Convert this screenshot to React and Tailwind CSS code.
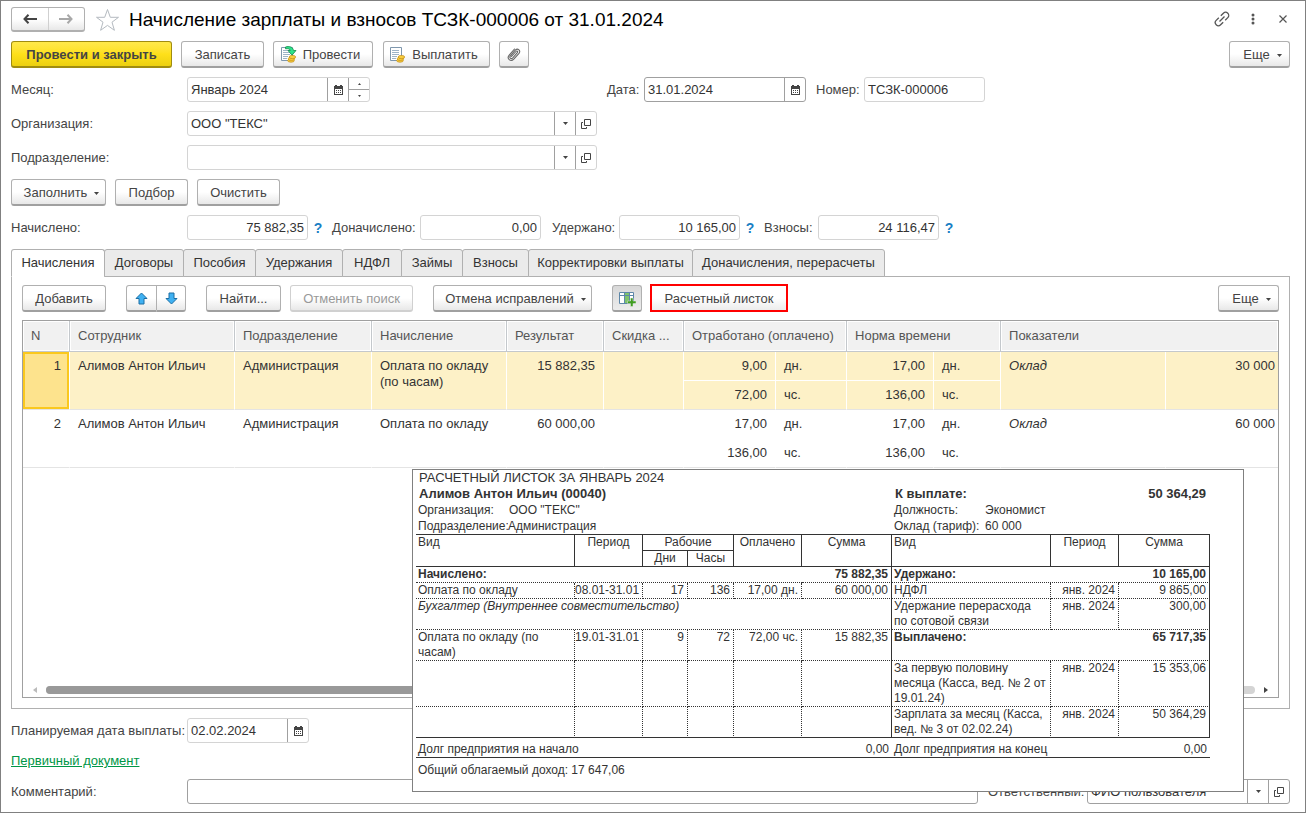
import { useState } from "react";
import clsx from "clsx";

const TABS = [
  { title: "Начисления", width: "w-[94px]" },
  { title: "Договоры", width: "w-[80px]" },
  { title: "Пособия", width: "w-[73px]" },
  { title: "Удержания", width: "w-[88px]" },
  { title: "НДФЛ", width: "w-[60px]" },
  { title: "Займы", width: "w-[62px]" },
  { title: "Взносы", width: "w-[67px]" },
  { title: "Корректировки выплаты", width: "w-[165px]" },
  { title: "Доначисления, перерасчеты", width: "w-[193px]" },
];

const ROWS = [
  {
    n: 1,
    name: "Алимов Антон Ильич",
    dept: "Администрация",
    accrual: "Оплата по окладу (по часам)",
    result: "15 882,35",
    days: "9,00",
    hours: "72,00",
    normDays: "17,00",
    normHours: "136,00",
    salary: "30 000",
  },
  {
    n: 2,
    name: "Алимов Антон Ильич",
    dept: "Администрация",
    accrual: "Оплата по окладу",
    result: "60 000,00",
    days: "17,00",
    hours: "136,00",
    normDays: "17,00",
    normHours: "136,00",
    salary: "60 000",
  },
];

function CalendarIcon() {
  return (
    <svg width="9" height="10" viewBox="0 0 9 10" fill="#444" shapeRendering="crispEdges">
      <path d="M0 1h1V0h2v1h3V0h2v1h1v9H0zM1 4v5h7V4z" fillRule="evenodd" />
      <path d="M2 5h1v1H2zM4 5h1v1H4zM6 5h1v1H6zM2 7h1v1H2zM4 7h1v1H4zM6 7h1v1H6z" />
    </svg>
  );
}

function Caret({ className }) {
  return (
    <svg width="5" height="3" viewBox="0 0 5 3" fill="#444" className={className}>
      <path d="M0 0h5L2.5 3z" />
    </svg>
  );
}

function OpenIcon() {
  return (
    <svg width="10" height="10" viewBox="0 0 10 10" fill="none" stroke="#444">
      <path d="M3.5 0.5h6v6h-6z" />
      <path d="M2 3.5H0.5v6h5V8" />
    </svg>
  );
}

function SheetIcon({ posted }) {
  return (
    <svg width="17" height="17" viewBox="0 0 17 17">
      <path d="M1.5 1.5h11v13h-11z" fill="#fff" stroke="#7f97ad" />
      <path
        d="M3 4.5h7M3 6.5h7M3 8.5h7M3 10.5h5M3 12.5h4"
        stroke="#9db3c7"
      />
      {posted && (
        <path
          d="M5.5 1C9-0.2 13 0.800 13.500 4.500h2.500L12 9.200 8 4.500h2.300C10 3 8.500 2.400 5.500 2.800z"
          fill="#2ee28b"
          stroke="#128a4a"
          strokeWidth="0.8"
        />
      )}
      <g fill="#f9cf3f" stroke="#c08a12" strokeWidth="0.7">
        <ellipse cx="11" cy="14.6" rx="3.3" ry="1.6" />
        <ellipse cx="11.4" cy="12.8" rx="3.3" ry="1.6" />
        <ellipse cx="12.4" cy="11" rx="3.3" ry="1.6" />
      </g>
    </svg>
  );
}

function ClipIcon() {
  return (
    <svg
      width="14"
      height="15"
      viewBox="0 0 14 15"
      fill="none"
      stroke="#666"
      strokeWidth="1.1"
      strokeLinecap="round"
    >
      <path d="M4.500 9.500 9 4.500c1-1.100 2.300 0 1.300 1.200L5.800 10.800C4 12.600 1.800 10.600 3.400 8.800L8.300 3.200c2.400-2.500 6 0.500 3.700 3.200L6.800 12.200c-3.200 3.200-7.500-0.600-4.600-4L7.500 2" />
    </svg>
  );
}

function Arrow({ down }) {
  return (
    <svg
      width="13"
      height="13"
      viewBox="0 0 13 13"
      className={down ? "rotate-180" : ""}
    >
      <path
        d="M6.500 1 12 6.500H9V12H4V6.500H1z"
        fill="#3fb1f2"
        stroke="#1c6ea4"
        strokeLinejoin="round"
      />
    </svg>
  );
}

function NavArrow({ forward }) {
  return (
    <svg
      width="14"
      height="10"
      viewBox="0 0 14 10"
      fill="none"
      stroke={forward ? "#a8a8a8" : "#444"}
      strokeWidth="2"
      className={forward ? "rotate-180" : ""}
    >
      <path d="M1.5 5H14M5.5 0.8 1.5 5l4 4.2" />
    </svg>
  );
}

function Btn({ children, className, caret, disabled, pressed, ...rest }) {
  return (
    <button
      type="button"
      disabled={disabled}
      className={clsx(
        "flex h-[27px] shrink-0 items-center justify-center rounded-[3px] border border-b-2 pt-px",
        pressed
          ? "bg-linear-to-b from-[#d8d8d8] to-[#ececec]"
          : "bg-linear-to-b from-white from-50% to-[#e8e8e8]",
        disabled
          ? "border-[#d0d0d0] text-[#999]"
          : "border-[#b0b0b0] border-b-[#a0a0a0] text-[#444]",
        caret && "pl-[6px]",
        className
      )}
      {...rest}
    >
      {children}
      {caret && <Caret className="mt-[2px] ml-[7px]" />}
    </button>
  );
}

function Field({ id, value, dark, right, className, children }) {
  const [text, setText] = useState(value);
  return (
    <div
      className={clsx(
        "flex h-[25px] shrink-0 overflow-hidden rounded-[3px] border bg-white",
        dark ? "border-[#a0a0a0]" : "border-[#d4d4d4]",
        className
      )}
    >
      <input
        id={id}
        type="text"
        value={text}
        onChange={(e) => setText(e.target.value)}
        className={clsx(
          "w-0 min-w-0 flex-1 px-[3px] text-[#333] outline-none",
          right && "text-right"
        )}
      />
      {children}
    </div>
  );
}

function FieldBtn({ label, children }) {
  return (
    <button
      type="button"
      aria-label={label}
      className="flex w-[21px] shrink-0 items-center justify-center border-l border-[#a0a0a0]"
    >
      {children}
    </button>
  );
}

function SelectButtons() {
  return (
    <>
      <FieldBtn label="Выбрать">
        <Caret />
      </FieldBtn>
      <FieldBtn label="Открыть">
        <OpenIcon />
      </FieldBtn>
    </>
  );
}

function Help() {
  return (
    <button type="button" className="w-[24px] pr-1 text-center text-[14px] font-bold text-[#1a7fc4]">
      ?
    </button>
  );
}

function AccrualRows({ row, selected }) {
  const base = "border-r border-white py-[6px] align-top";
  const cell = clsx(base, selected && "bg-[#fdf1c7]");
  const last = "border-b border-b-[#e4e4e4]";
  const inner = clsx(cell, "border-b");
  return (
    <>
      <tr className="h-[29px]">
        <td
          rowSpan={2}
          className={clsx(
            base,
            last,
            "pr-2 text-right",
            selected && "bg-[#fde38d] shadow-[inset_0_0_0_2px_#fac81e]"
          )}
        >
          {row.n}
        </td>
        <td rowSpan={2} className={clsx(cell, last, "pl-2")}>{row.name}</td>
        <td rowSpan={2} className={clsx(cell, last, "pl-2")}>{row.dept}</td>
        <td rowSpan={2} className={clsx(cell, last, "pl-2")}>{row.accrual}</td>
        <td rowSpan={2} className={clsx(cell, last, "pr-2 text-right")}>{row.result}</td>
        <td rowSpan={2} className={clsx(cell, last)}></td>
        <td className={clsx(inner, "pr-2 text-right")}>{row.days}</td>
        <td className={clsx(inner, "pl-2")}>дн.</td>
        <td className={clsx(inner, "pr-2 text-right")}>{row.normDays}</td>
        <td className={clsx(inner, "pl-2")}>дн.</td>
        <td rowSpan={2} className={clsx(cell, last, "pl-2 italic")}>Оклад</td>
        <td rowSpan={2} className={clsx(cell, last, "border-r-0 pr-[3px] text-right")}>{row.salary}</td>
      </tr>
      <tr className="h-[29px]">
        <td className={clsx(cell, last, "pr-2 text-right")}>{row.hours}</td>
        <td className={clsx(cell, last, "pl-2")}>чс.</td>
        <td className={clsx(cell, last, "pr-2 text-right")}>{row.normHours}</td>
        <td className={clsx(cell, last, "pl-2")}>чс.</td>
      </tr>
    </>
  );
}

function AccrualTable() {
  const th =
    "h-[31px] truncate border-r border-b border-[#c4c8cc] bg-[#f1f1f1] pl-2 text-left font-normal text-[#555] shadow-[inset_1px_1px_0_#fff,inset_-1px_-1px_0_#fff]";
  return (
    <table className="w-full table-fixed border-separate border-spacing-0 leading-4 text-[#333]">
      <colgroup>
        <col className="w-[47px]" />
        <col className="w-[165px]" />
        <col className="w-[137px]" />
        <col className="w-[135px]" />
        <col className="w-[97px]" />
        <col className="w-[80px]" />
        <col className="w-[92px]" />
        <col className="w-[71px]" />
        <col className="w-[87px]" />
        <col className="w-[67px]" />
        <col className="w-[165px]" />
        <col />
      </colgroup>
      <thead>
        <tr>
          <th className={th}>N</th>
          <th className={th}>Сотрудник</th>
          <th className={th}>Подразделение</th>
          <th className={th}>Начисление</th>
          <th className={th}>Результат</th>
          <th className={th}>Скидка ...</th>
          <th colSpan={2} className={th}>Отработано (оплачено)</th>
          <th colSpan={2} className={th}>Норма времени</th>
          <th colSpan={2} className={clsx(th, "border-r-0")}>Показатели</th>
        </tr>
      </thead>
      <tbody>
        {ROWS.map((row) => (
          <AccrualRows key={row.n} row={row} selected={row.n === 1} />
        ))}
      </tbody>
    </table>
  );
}

function Payslip() {
  const line = "border-[#333]";
  const dots = "border-b border-b-[#333] [border-bottom-style:dotted]";
  const dotR = "border-r border-r-[#333] [border-right-style:dotted]";
  const solidR = "border-r border-r-[#333]";
  const num = "pr-[3px] text-right whitespace-nowrap";
  return (
    <section className="absolute top-[468px] left-[411px] w-[832px] border border-[#808080] bg-white pr-[33px] pb-[13px] pl-[3px] text-[12px] leading-[15px] text-[#333]">
      <div className="pl-[3px] text-[13px]">РАСЧЕТНЫЙ ЛИСТОК ЗА ЯНВАРЬ 2024</div>
      <div className="flex h-[17px] items-center pl-[3px] text-[13px] font-bold">
        <span className="w-[476px]">Алимов Антон Ильич (00040)</span>
        <span>К выплате:</span>
        <span className="ml-auto pr-1">50 364,29</span>
      </div>
      <div className="flex h-4 items-end pl-[2px]">
        <span className="w-[91px]">Организация:</span>
        <span className="w-[385px]">ООО "ТЕКС"</span>
        <span className="w-[91px]">Должность:</span>
        <span>Экономист</span>
      </div>
      <div className="flex h-4 items-end pl-[2px]">
        <span className="w-[90px] overflow-hidden">Подразделение:</span>
        <span className="w-[386px]">Администрация</span>
        <span className="w-[91px]">Оклад (тариф):</span>
        <span>60 000</span>
      </div>
      <table className="w-full table-fixed border-separate border-spacing-0 border-t border-[#333] [&_td]:align-top [&_th]:align-top [&_th]:font-normal">
        <colgroup>
          <col className="w-[159px]" />
          <col className="w-[68px]" />
          <col className="w-[45px]" />
          <col className="w-[46px]" />
          <col className="w-[68px]" />
          <col className="w-[90px]" />
          <col className="w-[159px]" />
          <col className="w-[68px]" />
          <col />
        </colgroup>
        <thead>
          <tr className="h-4">
            <th rowSpan={2} className={clsx(line, "border-r border-b pl-[2px] text-left")}>Вид</th>
            <th rowSpan={2} className={clsx(line, "border-r border-b")}>Период</th>
            <th colSpan={2} className={clsx(line, "border-r border-b")}>Рабочие</th>
            <th rowSpan={2} className={clsx(line, "border-r border-b")}>Оплачено</th>
            <th rowSpan={2} className={clsx(line, "border-r border-b")}>Сумма</th>
            <th rowSpan={2} className={clsx(line, "border-r border-b pl-[2px] text-left")}>Вид</th>
            <th rowSpan={2} className={clsx(line, "border-r border-b")}>Период</th>
            <th rowSpan={2} className={clsx(line, "border-r border-b")}>Сумма</th>
          </tr>
          <tr className="h-4">
            <th className={clsx(line, "border-r border-b")}>Дни</th>
            <th className={clsx(line, "border-r border-b")}>Часы</th>
          </tr>
        </thead>
        <tbody>
          <tr className="h-4 font-bold">
            <td colSpan={5} className={clsx(dots, "pl-[2px]")}>Начислено:</td>
            <td className={clsx(dots, solidR, num)}>75 882,35</td>
            <td colSpan={2} className={clsx(dots, "pl-[2px]")}>Удержано:</td>
            <td className={clsx(dots, solidR, num)}>10 165,00</td>
          </tr>
          <tr className="h-4">
            <td className={clsx(dots, dotR, "pl-[2px]")}>Оплата по окладу</td>
            <td className={clsx(dots, dotR, num)}>08.01-31.01</td>
            <td className={clsx(dots, dotR, num)}>17</td>
            <td className={clsx(dots, dotR, num)}>136</td>
            <td className={clsx(dots, dotR, num)}>17,00 дн.</td>
            <td className={clsx(dots, solidR, num)}>60 000,00</td>
            <td className={clsx(dots, dotR, "pl-[2px]")}>НДФЛ</td>
            <td className={clsx(dots, dotR, num)}>янв. 2024</td>
            <td className={clsx(dots, solidR, num)}>9 865,00</td>
          </tr>
          <tr className="h-[31px]">
            <td colSpan={6} className={clsx(dots, solidR, "pl-[2px] italic")}>
              Бухгалтер (Внутреннее совместительство)
            </td>
            <td className={clsx(dots, dotR, "pl-[2px]")}>
              Удержание перерасхода
              <br />
              по сотовой связи
            </td>
            <td className={clsx(dots, dotR, num)}>янв. 2024</td>
            <td className={clsx(dots, solidR, num)}>300,00</td>
          </tr>
          <tr className="h-[31px]">
            <td className={clsx(dots, dotR, "pl-[2px]")}>
              Оплата по окладу (по
              <br />
              часам)
            </td>
            <td className={clsx(dots, dotR, num)}>19.01-31.01</td>
            <td className={clsx(dots, dotR, num)}>9</td>
            <td className={clsx(dots, dotR, num)}>72</td>
            <td className={clsx(dots, dotR, num)}>72,00 чс.</td>
            <td className={clsx(dots, solidR, num)}>15 882,35</td>
            <td colSpan={2} className={clsx(dots, "pl-[2px] font-bold")}>Выплачено:</td>
            <td className={clsx(dots, solidR, num, "font-bold")}>65 717,35</td>
          </tr>
          <tr className="h-[46px]">
            <td className={clsx(dots, dotR)}></td>
            <td className={clsx(dots, dotR)}></td>
            <td className={clsx(dots, dotR)}></td>
            <td className={clsx(dots, dotR)}></td>
            <td className={clsx(dots, dotR)}></td>
            <td className={clsx(dots, solidR)}></td>
            <td className={clsx(dots, dotR, "pl-[2px]")}>
              За первую половину
              <br />
              месяца (Касса, вед. № 2 от 19.01.24)
            </td>
            <td className={clsx(dots, dotR, num)}>янв. 2024</td>
            <td className={clsx(dots, solidR, num)}>15 353,06</td>
          </tr>
          <tr className="h-[31px] [&>td]:border-b [&>td]:border-b-[#333]">
            <td className={dotR}></td>
            <td className={dotR}></td>
            <td className={dotR}></td>
            <td className={dotR}></td>
            <td className={dotR}></td>
            <td className={solidR}></td>
            <td className={clsx(dotR, "pl-[2px]")}>
              Зарплата за месяц (Касса,
              <br />
              вед. № 3 от 02.02.24)
            </td>
            <td className={clsx(dotR, num)}>янв. 2024</td>
            <td className={clsx(solidR, num)}>50 364,29</td>
          </tr>
          <tr className="h-5 [&>td]:border-b [&>td]:border-b-[#333] [&>td]:align-bottom">
            <td colSpan={5} className="pl-[2px]">Долг предприятия на начало</td>
            <td className={num}>0,00</td>
            <td colSpan={2} className="pl-[2px]">Долг предприятия на конец</td>
            <td className={num}>0,00</td>
          </tr>
        </tbody>
      </table>
      <div className="pt-[5px] pl-[2px]">Общий облагаемый доход: 17 647,06</div>
    </section>
  );
}

export default function App() {
  const [tab, setTab] = useState(0);

  return (
    <div className="relative flex min-h-screen flex-col gap-[9px] border border-[#808080] bg-white pt-[6px] pr-[15px] pb-[8px] pl-[10px] font-['Liberation_Sans',Arial,sans-serif] text-[13px] leading-4 text-[#444]">
      <header className="flex h-[25px] items-center pr-[3px]">
        <div className="flex h-[25px] w-[74px] rounded-[3px] border border-b-2 border-[#b0b0b0] bg-linear-to-b from-white from-50% to-[#e8e8e8]">
          <button type="button" aria-label="Назад" className="flex flex-1 items-center justify-center border-r border-[#d0d0d0]">
            <NavArrow />
          </button>
          <button type="button" aria-label="Вперед" className="flex flex-1 items-center justify-center">
            <NavArrow forward />
          </button>
        </div>
        <button type="button" aria-label="В избранное" className="ml-[10px]">
          <svg width="25" height="24" viewBox="0 0 25 24" fill="none" stroke="#b4bac0">
            <path d="M12.500 1.500 15.300 9.300H23.500L17 14.200 19.400 22.300 12.500 17.400 5.600 22.300 8 14.200 1.500 9.300H9.700z" />
          </svg>
        </button>
        <h1 className="ml-[9px] text-[19px] font-medium text-black">
          Начисление зарплаты и взносов ТСЗК-000006 от 31.01.2024
        </h1>
        <div className="ml-auto flex items-center pb-[2px]">
          <button type="button" aria-label="Ссылка">
            <svg width="16" height="16" viewBox="0 0 16 16" fill="none" stroke="#555" strokeWidth="1.3">
              <path d="M5.500 10.500l5-5M6.800 4.800l2.600-2.600a3 3 0 0 1 4.400 4.400L11.200 9.200M9.200 11.200l-2.600 2.600a3 3 0 0 1-4.400-4.400L4.800 6.800" />
            </svg>
          </button>
          <button type="button" aria-label="Меню" className="ml-[21px]">
            <svg width="4" height="12" viewBox="0 0 4 12" fill="#555">
              <circle cx="2" cy="2" r="1.500" />
              <circle cx="2" cy="6" r="1.500" />
              <circle cx="2" cy="10" r="1.500" />
            </svg>
          </button>
          <button type="button" aria-label="Закрыть" className="ml-[24px]">
            <svg width="8" height="8" viewBox="0 0 8 8" stroke="#555" strokeWidth="1.2">
              <path d="M0.5 0.5l7 7M7.5 0.5l-7 7" />
            </svg>
          </button>
        </div>
      </header>

      <div className="flex">
        <button
          type="button"
          className="h-[27px] w-[161px] rounded-[3px] border border-b-2 border-[#a08c10] bg-linear-to-b from-[#ffe94a] via-[#fee01a] to-[#ecd010] pt-px font-bold text-[#444]"
        >
          Провести и закрыть
        </button>
        <Btn className="ml-[9px] w-[83px]">Записать</Btn>
        <Btn className="ml-[9px] w-[100px] gap-[6px] pr-[6px]">
          <SheetIcon posted />
          Провести
        </Btn>
        <Btn className="ml-[10px] w-[107px] gap-[6px] pr-[6px]">
          <SheetIcon />
          Выплатить
        </Btn>
        <Btn className="ml-[9px] w-[30px]" aria-label="Файлы">
          <ClipIcon />
        </Btn>
        <Btn className="ml-auto w-[61px]" caret>Еще</Btn>
      </div>

      <div className="flex items-center">
        <label htmlFor="month" className="w-[176px]">Месяц:</label>
        <Field id="month" value="Январь 2024" className="w-[183px]">
          <FieldBtn label="Календарь">
            <CalendarIcon />
          </FieldBtn>
          <div className="flex w-[21px] flex-col border-l border-[#a0a0a0]">
            <button type="button" aria-label="Больше" className="flex flex-1 items-center justify-center border-b border-[#a0a0a0]">
              <svg width="3" height="2" viewBox="0 0 3 2" fill="#444">
                <path d="M1.5 0 3 2H0z" />
              </svg>
            </button>
            <button type="button" aria-label="Меньше" className="flex flex-1 items-center justify-center">
              <svg width="3" height="2" viewBox="0 0 3 2" fill="#444">
                <path d="M1.5 2 3 0H0z" />
              </svg>
            </button>
          </div>
        </Field>
        <label htmlFor="date" className="ml-[237px] w-[37px]">Дата:</label>
        <Field id="date" value="31.01.2024" dark className="w-[162px]">
          <FieldBtn label="Календарь">
            <CalendarIcon />
          </FieldBtn>
        </Field>
        <label htmlFor="number" className="ml-[10px] w-[48px]">Номер:</label>
        <Field id="number" value="ТСЗК-000006" className="w-[121px]" />
      </div>

      <div className="flex items-center">
        <label htmlFor="org" className="w-[176px]">Организация:</label>
        <Field id="org" value={'ООО "ТЕКС"'} className="w-[410px]">
          <SelectButtons />
        </Field>
      </div>

      <div className="flex items-center">
        <label htmlFor="dept" className="w-[176px]">Подразделение:</label>
        <Field id="dept" value="" className="w-[410px]">
          <SelectButtons />
        </Field>
      </div>

      <div className="flex gap-[9px]">
        <Btn className="w-[95px]" caret>Заполнить</Btn>
        <Btn className="w-[73px]">Подбор</Btn>
        <Btn className="w-[83px]">Очистить</Btn>
      </div>

      <div className="flex items-center">
        <label htmlFor="accrued" className="w-[176px]">Начислено:</label>
        <Field id="accrued" value="75 882,35" right className="w-[121px]" />
        <Help />
        <label htmlFor="extra" className="w-[88px]">Доначислено:</label>
        <Field id="extra" value="0,00" right className="w-[121px]" />
        <label htmlFor="withheld" className="ml-[11px] w-[67px]">Удержано:</label>
        <Field id="withheld" value="10 165,00" right className="w-[121px]" />
        <Help />
        <label htmlFor="fees" className="w-[54px]">Взносы:</label>
        <Field id="fees" value="24 116,47" right className="w-[121px]" />
        <Help />
      </div>

      <main className="flex flex-1 flex-col">
        <div className="z-10 -mb-px flex" role="tablist">
          {TABS.map((t, i) => (
            <button
              key={t.title}
              type="button"
              role="tab"
              aria-selected={i === tab}
              onClick={() => setTab(i)}
              className={clsx(
                "-mr-px h-[28px] shrink-0 rounded-t-[3px] border border-[#b0b0b0] text-[#333]",
                i === tab ? "border-b-white bg-white" : "bg-[#ebebeb]",
                t.width
              )}
            >
              {t.title}
            </button>
          ))}
        </div>
        <div className="flex flex-1 flex-col gap-[8px] border border-[#b0b0b0] px-[10px] pt-[8px] pb-[10px]">
          <div className="flex h-[27px]">
            <Btn className="w-[84px]">Добавить</Btn>
            <Btn className="ml-[20px] w-[31px] rounded-r-none" aria-label="Вверх">
              <Arrow />
            </Btn>
            <Btn className="w-[29px] rounded-l-none border-l-0" aria-label="Вниз">
              <Arrow down />
            </Btn>
            <Btn className="ml-[20px] w-[75px]">Найти...</Btn>
            <Btn className="ml-[9px] w-[123px]" disabled>Отменить поиск</Btn>
            <Btn className="ml-[20px] w-[159px]" caret>Отмена исправлений</Btn>
            <Btn className="ml-[20px] w-[30px]" pressed aria-label="Колонки">
              <svg width="17" height="16" viewBox="0 0 17 16">
                <path d="M0.5 1.5h14v11h-14z" fill="#fff" stroke="#5d87a8" />
                <path d="M5 2h5v10H5z" fill="#7fc36a" />
                <path d="M0.5 4.5h14M5.5 1v12M10.5 1v12" stroke="#5d87a8" />
                <path d="M11.500 7h2.500v3h3v2.500h-3v3h-2.500v-3h-3V10h3z" fill="#3f9d1f" stroke="#e8e8e8" strokeWidth="0.5" />
              </svg>
            </Btn>
            <button
              type="button"
              className="-mt-px ml-[8px] h-[28px] w-[138px] border-2 border-[#f00] bg-linear-to-b from-white from-50% to-[#ececec] pt-px"
            >
              Расчетный листок
            </button>
            <Btn className="ml-auto w-[61px]" caret>Еще</Btn>
          </div>
          <div className="flex flex-1 flex-col border border-[#a0a0a0]">
            <AccrualTable />
            <div className="mt-auto flex h-[15px] items-center gap-[9px] px-[10px]">
              <svg width="4" height="6" viewBox="0 0 4 6" fill="#bbb">
                <path d="M4 0v6L0 3z" />
              </svg>
              <div className="h-2 flex-1 rounded-full bg-[#d4d4d4]">
                <div className="h-2 w-4/5 rounded-full bg-[#999]"></div>
              </div>
              <svg width="4" height="6" viewBox="0 0 4 6" fill="#444">
                <path d="M0 0v6l4-3z" />
              </svg>
            </div>
          </div>
        </div>
      </main>

      <div className="flex items-center">
        <label htmlFor="payDate" className="w-[176px]">Планируемая дата выплаты:</label>
        <Field id="payDate" value="02.02.2024" className="w-[122px]">
          <FieldBtn label="Календарь">
            <CalendarIcon />
          </FieldBtn>
        </Field>
      </div>
      <div className="h-[18px] pt-px">
        <a href="#document" className="text-[#009646] underline">Первичный документ</a>
      </div>
      <div className="flex items-center">
        <label htmlFor="comment" className="w-[176px] shrink-0">Комментарий:</label>
        <Field id="comment" value="" dark className="min-w-0 flex-1" />
        <label htmlFor="owner" className="ml-[10px] w-[99px] shrink-0">Ответственный:</label>
        <Field id="owner" value="ФИО пользователя" dark className="w-[203px]">
          <SelectButtons />
        </Field>
      </div>

      <Payslip />
    </div>
  );
}
